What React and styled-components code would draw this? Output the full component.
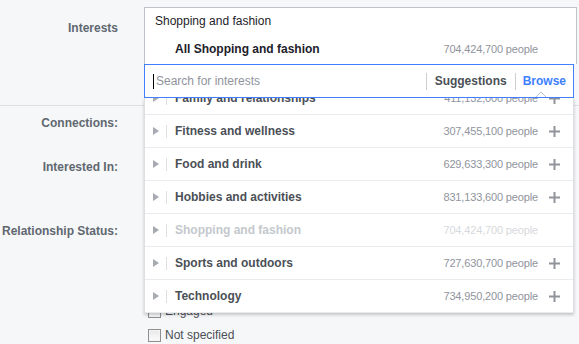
import React from "react";
import styled, { createGlobalStyle } from "styled-components";

const GlobalStyle = createGlobalStyle`
  html, body {
    margin: 0;
    padding: 0;
    background: #f6f7f9;
  }
  body {
    font-family: "Liberation Sans", Arial, sans-serif;
    font-size: 12px;
    color: #4b4f56;
  }
`;

const Page = styled.div`
  position: relative;
  width: 579px;
  height: 344px;
  overflow: hidden;
`;

const FormRow = styled.div`
  display: grid;
  grid-template-columns: 118px 1fr;
  column-gap: 30px;
  box-sizing: border-box;
  height: ${props => props.$height}px;
  padding-top: ${props => props.$pad || 0}px;
  border-bottom: ${props => (props.$divider ? "1px solid #dddfe2" : "none")};
`;

const Label = styled.div`
  text-align: right;
  font-weight: bold;
  line-height: 14px;
  color: #606770;
`;

/* the first options of the list sit under the open popover */
const Options = styled.div`
  display: flex;
  flex-direction: column;
  padding-top: 75px;
`;

const Option = styled.label`
  display: flex;
  align-items: center;
  height: 24px;
  color: #4b4f56;
`;

const Box = styled.span`
  width: 11px;
  height: 11px;
  border: 1px solid #8e8f8f;
  background: linear-gradient(#e6e6e6, #fdfdfd);
  box-shadow: inset 0 0 0 1px #f4f4f4;
  margin-right: 4px;
`;

const Popover = styled.div`
  position: absolute;
  left: 144px;
  top: 7px;
  width: 433px;
`;

const Header = styled.div`
  box-sizing: border-box;
  height: 57px;
  background: #fff;
  border: 1px solid #bec3c9;
  border-bottom: 0;
`;

const Title = styled.div`
  padding: 6px 10px 0;
  line-height: 14px;
  color: #1d2129;
`;

const AllRow = styled.div`
  display: flex;
  align-items: center;
  margin-top: 14px;
  padding: 0 38px 0 30px;
  line-height: 14px;
  font-weight: bold;
  color: #1d2129;
`;

const Count = styled.span`
  margin-left: auto;
  font-size: 11px;
  font-weight: normal;
  letter-spacing: -0.15px;
  color: ${props => (props.$faded ? "#d6d9dd" : "#90949c")};
`;

const Search = styled.div`
  position: relative;
  box-sizing: border-box;
  width: 430px;
  height: 34px;
  display: flex;
  align-items: center;
  background: #fff;
  border: 1px solid #4080ff;
`;

const Caret = styled.span`
  width: 1px;
  height: 15px;
  margin-left: 8px;
  background: #000;
`;

const Placeholder = styled.span`
  flex: 1;
  margin-left: 2px;
  color: #90949c;
`;

const TabDivider = styled.span`
  width: 1px;
  height: 17px;
  background: #ccd0d5;
`;

const Tab = styled.span`
  position: relative;
  padding: 0 ${props => props.$pad}px;
  font-weight: bold;
  line-height: 14px;
  color: ${props => (props.$active ? "#4080ff" : "#4b4f56")};
`;

const Pointer = styled.svg`
  position: absolute;
  left: calc(50% - 3px);
  bottom: -9px;
  transform: translateX(-50%);
`;

const List = styled.div`
  box-sizing: border-box;
  width: 430px;
  height: 215px;
  overflow: hidden;
  background: #fff;
  border-left: 1px solid #dddfe2;
  border-right: 1px solid #dddfe2;
  box-shadow: 0 2px 3px rgba(0, 0, 0, 0.2);
`;

const ListInner = styled.div`
  margin-top: -16px;
`;

const Row = styled.div`
  box-sizing: border-box;
  height: 33px;
  display: flex;
  align-items: center;
  padding: 0 13px 0 8px;
  border-bottom: 1px solid #e9ebee;
`;

const Arrow = styled.span`
  width: 0;
  height: 0;
  border-left: 6px solid #a7abb1;
  border-top: 4px solid transparent;
  border-bottom: 4px solid transparent;
`;

const RowDivider = styled.span`
  width: 1px;
  height: 13px;
  margin-left: 7px;
  background: #dddfe2;
`;

const RowName = styled.span`
  margin-left: 8px;
  font-weight: bold;
  color: ${props => (props.$faded ? "#c4c8cd" : "#4b4f56")};
`;

const Plus = styled.svg`
  margin-left: 11px;
  visibility: ${props => (props.$hidden ? "hidden" : "visible")};
`;

const categories = [
  ["Family and relationships", "411,132,000"],
  ["Fitness and wellness", "307,455,100"],
  ["Food and drink", "629,633,300"],
  ["Hobbies and activities", "831,133,600"],
  ["Shopping and fashion", "704,424,700", true],
  ["Sports and outdoors", "727,630,700"],
  ["Technology", "734,950,200"],
];

const statuses = ["Engaged", "Not specified"];

const App = () => {
  return (
    <Page>
      <GlobalStyle />
      <FormRow $height={106} $pad={21} $divider>
        <Label>Interests</Label>
        <div />
      </FormRow>
      <FormRow $height={54} $pad={10}>
        <Label>Connections:</Label>
        <div />
      </FormRow>
      <FormRow $height={64}>
        <Label>Interested In:</Label>
        <div />
      </FormRow>
      <FormRow $height={120}>
        <Label>Relationship Status:</Label>
        <Options>
          {statuses.map(s => (
            <Option key={s}>
              <Box />
              {s}
            </Option>
          ))}
        </Options>
      </FormRow>

      <Popover>
        <Header>
          <Title>Shopping and fashion</Title>
          <AllRow>
            All Shopping and fashion
            <Count>704,424,700 people</Count>
          </AllRow>
        </Header>
        <Search>
          <Caret />
          <Placeholder>Search for interests</Placeholder>
          <TabDivider />
          <Tab $pad={8}>Suggestions</Tab>
          <TabDivider />
          <Tab $pad={7} $active>
            Browse
            <Pointer width="11" height="6" viewBox="0 0 11 6">
              <polyline points="0.5,6 5.5,1 10.5,6" fill="#fff" stroke="#b9c4d6" strokeWidth="1" />
            </Pointer>
          </Tab>
        </Search>
        <List>
          <ListInner>
            {categories.map(([name, count, faded]) => (
              <Row key={name}>
                <Arrow />
                <RowDivider />
                <RowName $faded={faded}>{name}</RowName>
                <Count $faded={faded}>{count} people</Count>
                <Plus $hidden={faded} width="11" height="11" viewBox="0 0 11 11">
                  <rect x="0" y="4.5" width="11" height="2" fill="#90949c" />
                  <rect x="4.5" y="0" width="2" height="11" fill="#90949c" />
                </Plus>
              </Row>
            ))}
          </ListInner>
        </List>
      </Popover>
    </Page>
  );
};

export default App;
